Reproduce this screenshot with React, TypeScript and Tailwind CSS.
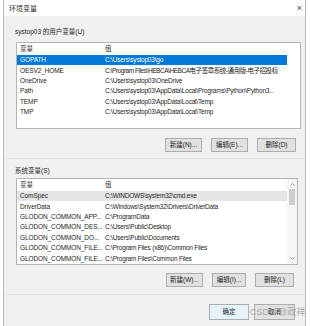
import { ChevronUp, ChevronDown } from 'lucide-react'

const userVars = [
	['GOPATH', 'C:\\Users\\systop03\\go'],
	['OESV2_HOME', 'C:\\Program Files\\HEBCA\\HEBCA电子签章系统-通用版-电子招投标'],
	['OneDrive', 'C:\\Users\\systop03\\OneDrive'],
	['Path', 'C:\\Users\\systop03\\AppData\\Local\\Programs\\Python\\Python3...'],
	['TEMP', 'C:\\Users\\systop03\\AppData\\Local\\Temp'],
	['TMP', 'C:\\Users\\systop03\\AppData\\Local\\Temp'],
]

const sysVars = [
	['ComSpec', 'C:\\WINDOWS\\system32\\cmd.exe'],
	['DriverData', 'C:\\Windows\\System32\\Drivers\\DriverData'],
	['GLODON_COMMON_APP...', 'C:\\ProgramData'],
	['GLODON_COMMON_DES...', 'C:\\Users\\Public\\Desktop'],
	['GLODON_COMMON_DO...', 'C:\\Users\\Public\\Documents'],
	['GLODON_COMMON_FILE...', 'C:\\Program Files (x86)\\Common Files'],
	['GLODON_COMMON_FILE...', 'C:\\Program Files\\Common Files'],
]

function Row({ name, value, cls }: { name: string; value: string; cls?: string }) {
	const tight = /[\u4e00-\u9fff]/.test(value)
	return (
		<div className={`flex h-[10.4px] w-[270px] items-center whitespace-nowrap leading-[10px] ${cls ?? ''}`}>
			<div className="w-[88px] shrink-0 overflow-hidden pl-[3px] tracking-[-0.1px]">{name}</div>
			<div className={`flex-1 overflow-hidden ${tight ? 'tracking-[-0.45px]' : 'tracking-[-0.2px]'}`}>{value}</div>
		</div>
	)
}

function Btn({ label, w = 'w-[37px]', cls = '' }: { label: string; w?: string; cls?: string }) {
	return (
		<div
			className={`flex h-[14px] ${w} items-center justify-center border border-[#adadad] bg-[#e1e1e1] ${cls}`}
		>
			{label}
		</div>
	)
}

function Header() {
	return (
		<div className="flex h-[12px] w-[270px] items-center text-[#333]">
			<div className="w-[88px] shrink-0 pl-[3px]">变量</div>
			<div className="flex-1">值</div>
		</div>
	)
}

export default function App() {
	return (
		<div
			className="relative h-[326px] w-[310px] overflow-hidden bg-white text-[6.5px] leading-none text-[#1e1e1e]"
			style={{ fontFamily: '"Liberation Sans", "Noto Sans CJK SC", sans-serif' }}
		>
			<div className="ml-[3px] flex h-full w-[303px] flex-col border-x border-[#b9b9b9]">
				{/* title bar */}
				<div className="flex h-[16px] shrink-0 items-center justify-between bg-white pl-[5px] pr-[3px]">
					<span className="text-[7px]">环境变量</span>
					<span className="text-[9px] text-[#444]">×</span>
				</div>

				<div className="flex flex-1 flex-col bg-[#f0f0f0]">
					{/* user section */}
					<div className="flex flex-col border-b border-[#e4e4e4] pb-[6px] pl-[11px] pr-[5px] pt-[13px]">
						<div className="h-[8px]">systop03 的用户变量(U)</div>
						<div className="mt-[5px] ml-[1px] h-[87px] w-[285px] border border-[#b5b5b5] bg-white">
							<Header />
							<Row name={userVars[0][0]} value={userVars[0][1]} cls="bg-[#0078d7] text-white" />
							{userVars.slice(1).map(([n, v], i) => (
								<Row key={i} name={n} value={v} />
							))}
						</div>
						<div className="mt-[9px] flex justify-end gap-[9px] pr-[4px]">
							<Btn label="新建(N)..." />
							<Btn label="编辑(E)..." />
							<Btn label="删除(D)" w="w-[39px]" />
						</div>
					</div>

					{/* system section */}
					<div className="flex flex-col border-b border-[#e4e4e4] pb-[7px] pl-[11px] pr-[5px] pt-[9px]">
						<div className="h-[8px]">系统变量(S)</div>
						<div className="mt-[2px] ml-[1px] flex h-[87px] w-[282px] border border-[#b5b5b5] bg-white">
							<div className="flex flex-col">
								<Header />
								<Row name={sysVars[0][0]} value={sysVars[0][1]} cls="bg-[#e5e5e5]" />
								{sysVars.slice(1).map(([n, v], i) => (
									<Row key={i} name={n} value={v} />
								))}
							</div>
							<div className="flex w-[10px] flex-col items-center bg-[#f5f5f5]">
								<ChevronUp size={7} strokeWidth={2} className="mt-[2px] text-[#606060]" />
								<div className="mt-[1px] h-[16px] w-[6px] bg-[#cdcdcd]" />
								<div className="flex-1" />
								<ChevronDown size={7} strokeWidth={2} className="mb-[2px] text-[#606060]" />
							</div>
						</div>
						<div className="mt-[8px] flex justify-end gap-[9px] pr-[6px]">
							<Btn label="新建(W)..." />
							<Btn label="编辑(I)..." w="w-[34px]" />
							<Btn label="删除(L)" w="w-[39px]" />
						</div>
					</div>

					{/* footer */}
					<div className="mt-[9px] flex justify-end gap-[5px] pr-[10px]">
						<Btn label="确定" w="w-[40px]" cls="h-[16px] border-[#0078d7] bg-[#e5f1fb]" />
						<Btn label="取消" w="w-[41px]" cls="h-[16px]" />
					</div>
				</div>
			</div>

			<div className="absolute left-[250px] top-[308px] text-[9px] text-[#9a9a9a] opacity-80">CSDN @政祥</div>
		</div>
	)
}
